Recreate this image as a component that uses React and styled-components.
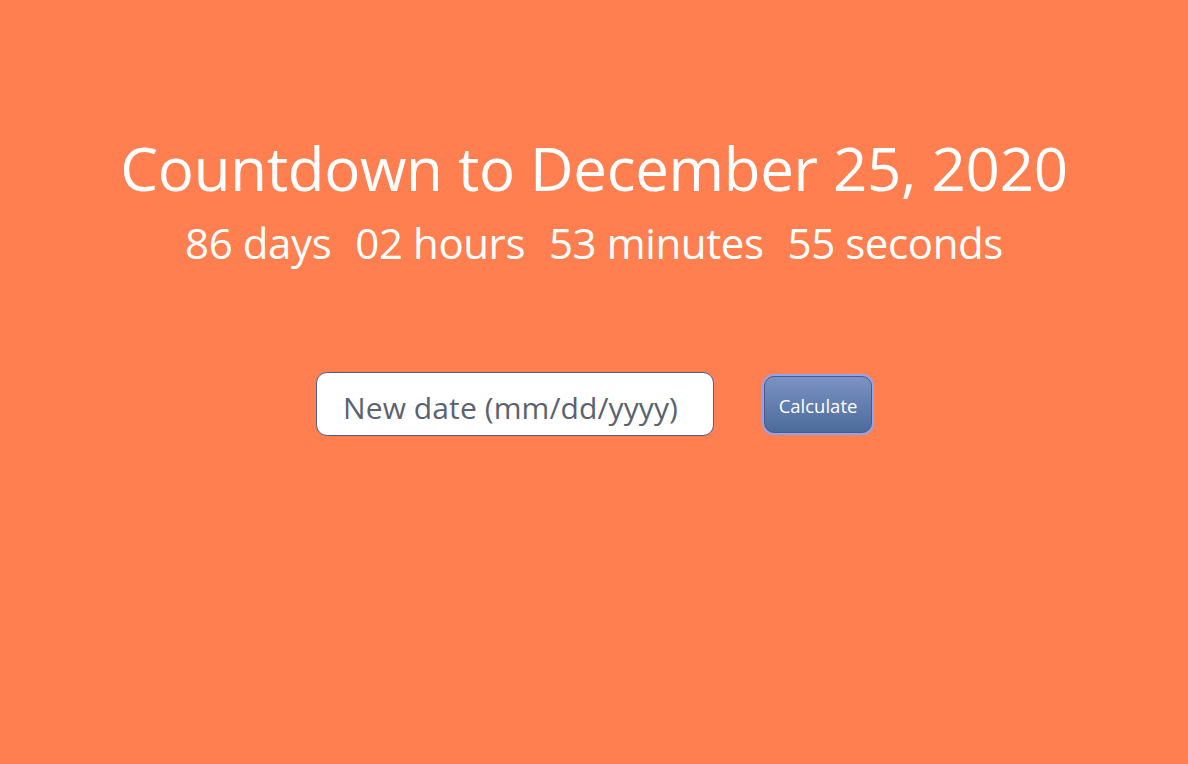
import styled, { createGlobalStyle } from 'styled-components';

const GlobalStyle = createGlobalStyle`
  html, body {
    margin: 0;
    padding: 0;
    background: #ff7f50;
  }
  body {
    font-family: "Open Sans", "Noto Sans", sans-serif;
  }
`;

export default function App() {
  return (
    <Page>
      <GlobalStyle />
      <Title>Countdown to December 25, 2020</Title>
      <Timer>
        <Unit>86 days</Unit>
        <Unit>02 hours</Unit>
        <Unit>53 minutes</Unit>
        <Unit>55 seconds</Unit>
      </Timer>
      <Form>
        <DateInput placeholder="New date (mm/dd/yyyy)" />
        <CalcButton>Calculate</CalcButton>
      </Form>
    </Page>
  );
}

const Page = styled.div`
  min-height: 764px;
  background: #ff7f50;
  display: flex;
  flex-direction: column;
  align-items: center;
  padding-top: 128px;
  box-sizing: border-box;
  color: #ffffff;
`;

const Title = styled.h1`
  margin: 0;
  font-weight: 400;
  font-size: 60px;
  line-height: 80px;
  letter-spacing: -0.3px;
`;

const Timer = styled.div`
  display: flex;
  gap: 24px;
  margin-top: 8px;
  font-size: 42px;
  line-height: 54px;
  letter-spacing: -0.4px;
`;

const Unit = styled.span``;

const Form = styled.div`
  display: flex;
  align-items: center;
  gap: 50px;
  margin-top: 102px;
`;

const DateInput = styled.input`
  width: 398px;
  height: 64px;
  box-sizing: border-box;
  border: 1px solid #4d5f93;
  border-radius: 11px;
  padding: 6px 0 0 26px;
  font-family: "Open Sans", "Noto Sans", sans-serif;
  font-size: 30px;
  letter-spacing: 0.1px;
  color: #5b6270;
  background: #ffffff;
  outline: none;

  &::placeholder {
    color: #5b6270;
    opacity: 1;
  }
`;

const CalcButton = styled.button`
  width: 108px;
  height: 57px;
  box-sizing: border-box;
  padding: 3px 0 0;
  border: 1px solid #4a5a8e;
  border-radius: 10px;
  box-shadow: 0 0 0 2px #8fa5f2;
  background: linear-gradient(to bottom, #7c93c4, #4b6b9b);
  color: #ffffff;
  font-family: "Open Sans", "Noto Sans", sans-serif;
  font-size: 18.5px;
  cursor: pointer;
`;
